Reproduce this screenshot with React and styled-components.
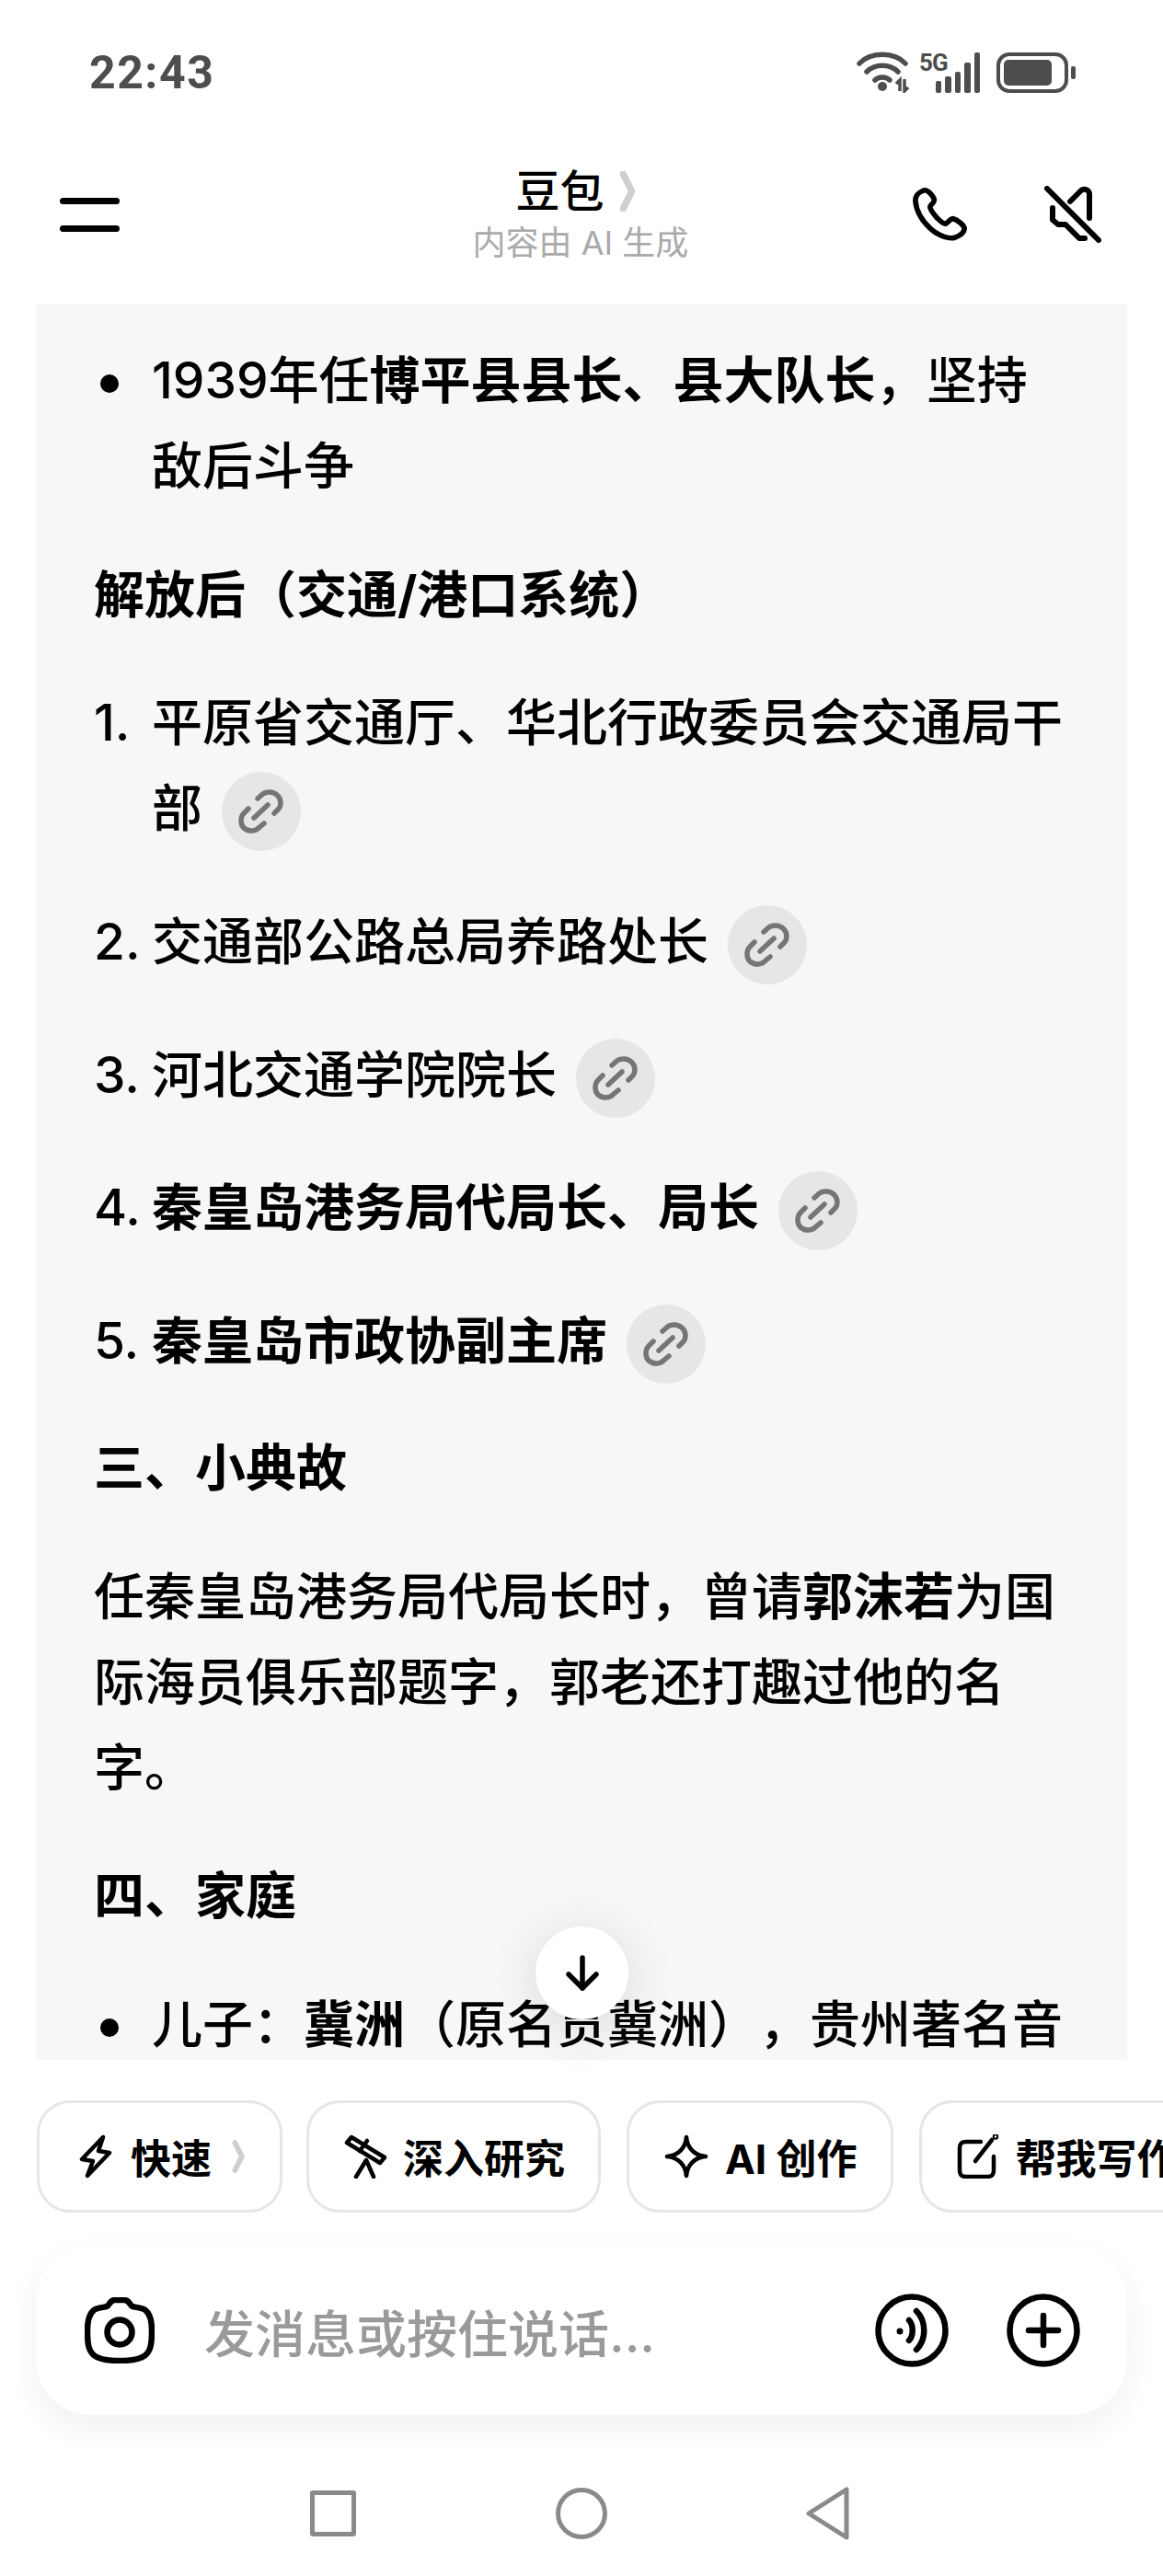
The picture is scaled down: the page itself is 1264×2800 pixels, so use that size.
import React from "react";
import styled, { createGlobalStyle } from "styled-components";

const FONT = `"Inter", "Noto Sans CJK SC", "Noto Sans", sans-serif`;

const GlobalStyle = createGlobalStyle`
  html, body {
    margin: 0;
    padding: 0;
    background: #fff;
  }
  body {
    font-family: ${FONT};
  }
`;

const Chevron = ({ className }) => (
  <svg className={className} viewBox="0 0 18 42" fill="none">
    <path d="M4 3 L13 21 L4 39" stroke="#cfcfcf" strokeWidth="7" strokeLinejoin="round" strokeLinecap="round" />
  </svg>
);

const LinkIcon = () => (
  <svg width="52" height="52" viewBox="-3 -3 52 52" fill="none" stroke="#757575" strokeWidth="5.5" strokeLinecap="round">
    <path d="M19 9 L24 4.5 C28 1 36 1 40.5 5.5 C45 10 45 17 41 21 L37 25" />
    <path d="M9 20 L4 25 C0 29 0 37 4 41 C9 45 16 45 20 41 L26 36" />
    <path d="M15 30 L30 16" />
  </svg>
);

const App = () => {
  return (
    <Page>
      <GlobalStyle />
      <StatusBar>
        <Clock>22:43</Clock>
        <StatusIcons>
          <svg width="58" height="46" viewBox="0 0 58 46" fill="none">
            <g stroke="#4d4d4d" strokeWidth="5.5" strokeLinecap="round">
              <path d="M3 14 C15 1 41 1 53 14" />
              <path d="M11 23 C20 14 36 14 45 23" />
              <path d="M20 32 C24 28 32 28 36 32" />
            </g>
            <circle cx="28" cy="39" r="5" fill="#4d4d4d" />
            <path d="M47 44 V32 L43 36 M52 31 V44 L56 40" stroke="#4d4d4d" strokeWidth="3.5" fill="none" />
          </svg>
          <Signal>
            <NetLabel>5G</NetLabel>
            <Bars>
              {[13, 18, 23, 33, 44].map((h) => (
                <Bar key={h} $h={h} />
              ))}
            </Bars>
          </Signal>
          <Battery>
            <BatteryShell>
              <BatteryLevel />
            </BatteryShell>
            <BatteryTip />
          </Battery>
        </StatusIcons>
      </StatusBar>

      <Header>
        <MenuButton>
          <MenuLine />
          <MenuLine />
        </MenuButton>
        <TitleBlock>
          <TitleRow>
            <Title>豆包</Title>
            <TitleChevron />
          </TitleRow>
          <Subtitle>内容由 AI 生成</Subtitle>
        </TitleBlock>
        <HeaderActions>
          <svg width="60" height="58" viewBox="0 0 64 62" fill="none" stroke="#000" strokeWidth="6" strokeLinejoin="round" strokeLinecap="round">
            <path d="M11 4 C6 6 3 10 3 15 C4 27 11 39 21 48 C30 56 42 60 49 58 C54 56 60 52 60 47 C59 43 51 37 47 36 C43 36 41 41 38 42 C32 41 20 27 20 22 C21 19 25 18 25 14 C24 10 18 3 14 3 C13 3 12 3 11 4 Z" />
          </svg>
          <svg width="62" height="62" viewBox="0 0 62 62" fill="none" stroke="#000" strokeWidth="6" strokeLinecap="round" strokeLinejoin="round">
            <path d="M3 3 L59 59" />
            <path d="M28 17 L40 5 C44 2 49 5 49 9 V35" />
            <path d="M9 24 V37 L15 42 H23 L38 57 H44" />
          </svg>
        </HeaderActions>
      </Header>

      <ChatArea>
        <Panel>
          <ListItem>
            <Bullet />
            <ItemText>
              1939年任<b>博平县县长、县大队长</b>，坚持敌后斗争
            </ItemText>
          </ListItem>

          <Heading>解放后（交通/港口系统）</Heading>

          <ListItem>
            <Num>1.</Num>
            <ItemText>
              平原省交通厅、华北行政委员会交通局干部
              <Cite>
                <LinkIcon />
              </Cite>
            </ItemText>
          </ListItem>
          <ListItem>
            <Num>2.</Num>
            <ItemText>
              交通部公路总局养路处长
              <Cite>
                <LinkIcon />
              </Cite>
            </ItemText>
          </ListItem>
          <ListItem>
            <Num>3.</Num>
            <ItemText>
              河北交通学院院长
              <Cite>
                <LinkIcon />
              </Cite>
            </ItemText>
          </ListItem>
          <ListItem>
            <Num>4.</Num>
            <ItemText>
              <b>秦皇岛港务局代局长、局长</b>
              <Cite>
                <LinkIcon />
              </Cite>
            </ItemText>
          </ListItem>
          <ListItem $last>
            <Num>5.</Num>
            <ItemText>
              <b>秦皇岛市政协副主席</b>
              <Cite>
                <LinkIcon />
              </Cite>
            </ItemText>
          </ListItem>

          <Heading>三、小典故</Heading>
          <Para>
            任秦皇岛港务局代局长时，曾请<b>郭沫若</b>为国际海员俱乐部题字，郭老还打趣过他的名字。
          </Para>

          <Heading>四、家庭</Heading>
          <ListItem>
            <Bullet />
            <ItemText>
              儿子：<b>冀洲</b>（原名贯冀洲），贵州著名音乐家
            </ItemText>
          </ListItem>
        </Panel>
        <ScrollDown>
          <svg width="36" height="40" viewBox="0 0 36 40" fill="none" stroke="#000" strokeWidth="5.5" strokeLinecap="round" strokeLinejoin="round">
            <path d="M18 3 V36" />
            <path d="M3 21 L18 36 L33 21" />
          </svg>
        </ScrollDown>
      </ChatArea>

      <ChipRow>
        <Chip $lead>
          <svg width="36" height="48" viewBox="0 0 36 48" fill="none" stroke="#000" strokeWidth="4.5" strokeLinejoin="round" strokeLinecap="round">
            <path d="M26 3 L3 27 L15 29 L9 45 L33 20 L21 18 Z" />
          </svg>
          快速
          <ChipChevron />
        </Chip>
        <Chip>
          <svg width="46" height="48" viewBox="0 0 46 48" fill="none" stroke="#000" strokeWidth="4.5" strokeLinejoin="round" strokeLinecap="round">
            <path d="M8 3 L44 25 L39 31 L3 9 Z" />
            <path d="M17 18 L25 7" />
            <path d="M24 28 L13 46 M24 28 L32 46" />
          </svg>
          深入研究
        </Chip>
        <Chip>
          <svg width="48" height="48" viewBox="0 0 48 48" fill="none" stroke="#000" strokeWidth="4.5" strokeLinejoin="round">
            <path d="M24 3 C25 15 33 23 45 24 C33 25 25 33 24 45 C23 33 15 25 3 24 C15 23 23 15 24 3 Z" />
          </svg>
          AI 创作
        </Chip>
        <Chip>
          <svg width="46" height="48" viewBox="0 0 46 48" fill="none" stroke="#000" strokeWidth="4.5" strokeLinecap="round" strokeLinejoin="round">
            <path d="M26 8 H10 C5 8 3 10 3 15 V39 C3 44 5 46 10 46 H33 C38 46 40 44 40 39 V24" />
            <path d="M20 29 L38 6" />
            <circle cx="42" cy="2.5" r="1" />
          </svg>
          帮我写作
        </Chip>
      </ChipRow>

      <InputCard>
        <svg width="76" height="72" viewBox="0 0 76 72" fill="none" stroke="#000" strokeWidth="6.5" strokeLinejoin="round">
          <path d="M24 10 C27 9 27 3 33 3 H43 C49 3 49 9 52 10 C54 11 62 11 66 14 C71 18 73 24 73 36 C73 50 72 58 66 63 C60 68 50 69 38 69 C26 69 16 68 10 63 C4 58 3 50 3 36 C3 24 5 18 10 14 C14 11 22 11 24 10 Z" />
          <circle cx="38" cy="38" r="13.5" />
        </svg>
        <Placeholder>发消息或按住说话...</Placeholder>
        <InputActions>
          <svg width="80" height="80" viewBox="0 0 80 80" fill="none" stroke="#000" strokeWidth="6.5" strokeLinecap="round">
            <circle cx="40" cy="40" r="36.5" />
            <path d="M37 29 C42 34 42 46 37 51" />
            <path d="M45 19 C56 30 56 50 45 61" />
            <circle cx="27" cy="41" r="3.5" fill="#000" stroke="none" />
          </svg>
          <svg width="80" height="80" viewBox="0 0 80 80" fill="none" stroke="#000" strokeWidth="6.5" strokeLinecap="round">
            <circle cx="40" cy="40" r="36.5" />
            <path d="M40 24 V56 M24 40 H56" />
          </svg>
        </InputActions>
      </InputCard>

      <NavBar>
        <NavSquare />
        <NavCircle />
        <svg width="48" height="58" viewBox="0 0 48 58" fill="none" stroke="#8a8a8a" strokeWidth="5" strokeLinejoin="round">
          <path d="M44 3 V55 L3 29 Z" />
        </svg>
      </NavBar>
    </Page>
  );
};

export default App;

const Page = styled.div`
  width: 1264px;
  height: 2800px;
  background: #fff;
  overflow: hidden;
  display: flex;
  flex-direction: column;
  font-family: ${FONT};
  color: #000;
`;

const StatusBar = styled.div`
  height: 156px;
  box-sizing: border-box;
  padding: 0 95px 0 97px;
  display: flex;
  align-items: center;
  justify-content: space-between;
`;

const Clock = styled.div`
  padding-top: 2px;
  font-family: "Roboto", sans-serif;
  font-weight: 700;
  font-size: 50px;
  letter-spacing: 1.5px;
  color: #4d4d4d;
`;

const StatusIcons = styled.div`
  display: flex;
  align-items: flex-end;
  gap: 10px;
`;

const Signal = styled.div`
  position: relative;
  width: 66px;
  height: 44px;
  display: flex;
  justify-content: flex-end;
  align-items: flex-end;
`;

const NetLabel = styled.span`
  position: absolute;
  left: 0;
  top: -4px;
  font-family: "Roboto", sans-serif;
  font-weight: 700;
  font-size: 26px;
  letter-spacing: -1px;
  color: #4d4d4d;
`;

const Bars = styled.div`
  display: flex;
  align-items: flex-end;
  gap: 4px;
`;

const Bar = styled.span`
  width: 6.5px;
  height: ${(p) => p.$h}px;
  background: #4d4d4d;
  border-radius: 2px;
`;

const Battery = styled.div`
  display: flex;
  align-items: center;
  gap: 3px;
  margin-left: 8px;
`;

const BatteryShell = styled.div`
  width: 78px;
  height: 44px;
  box-sizing: border-box;
  border: 4px solid #4d4d4d;
  border-radius: 14px;
  padding: 4px;
`;

const BatteryLevel = styled.div`
  width: 52px;
  height: 100%;
  background: #4d4d4d;
  border-radius: 5px;
`;

const BatteryTip = styled.div`
  width: 5px;
  height: 14px;
  background: #4d4d4d;
  border-radius: 2px;
`;

const Header = styled.header`
  height: 174px;
  box-sizing: border-box;
  padding: 0 67px 20px 65px;
  display: grid;
  grid-template-columns: 1fr auto 1fr;
  align-items: center;
`;

const MenuButton = styled.div`
  width: 65px;
  display: flex;
  flex-direction: column;
  gap: 23px;
`;

const MenuLine = styled.span`
  height: 7px;
  border-radius: 4px;
  background: #000;
`;

const TitleBlock = styled.div`
  display: flex;
  flex-direction: column;
  align-items: center;
`;

const TitleRow = styled.div`
  display: flex;
  align-items: center;
  gap: 16px;
  margin-left: -10px;
`;

const Title = styled.div`
  font-size: 48px;
  line-height: 56px;
  font-weight: 500;
`;

const TitleChevron = styled(Chevron)`
  width: 19px;
  height: 44px;
`;

const Subtitle = styled.div`
  margin-top: 6px;
  font-size: 36px;
  line-height: 44px;
  color: #aaa;
`;

const HeaderActions = styled.div`
  justify-self: end;
  display: flex;
  align-items: center;
  gap: 83px;
`;

const ChatArea = styled.div`
  position: relative;
  margin: 0 39px;
  height: 1909px;
`;

const Panel = styled.div`
  height: 100%;
  box-sizing: border-box;
  overflow: hidden;
  background: #f7f7f7;
  padding: 37px 63px 0;
  font-size: 55px;
  font-weight: 500;
  line-height: 93px;
  text-spacing-trim: space-all;

  b {
    font-weight: 700;
  }
`;

const ListItem = styled.div`
  display: grid;
  grid-template-columns: 63px 1fr;
  margin-bottom: ${(p) => (p.$last ? 39.7 : 46.7)}px;
`;

const Bullet = styled.span`
  width: 20px;
  height: 20px;
  margin: 40px 0 0 7px;
  border-radius: 50%;
  background: #000;
`;

const Num = styled.span`
  font-size: 55px;
`;

const ItemText = styled.div``;

const Heading = styled.div`
  font-weight: 700;
  margin-bottom: 46.7px;
`;

const Para = styled.p`
  margin: 0 0 46.7px;
`;

/* the flex baseline is the icon's bottom edge, 17px above the circle's */
const Cite = styled.span`
  display: inline-flex;
  align-items: center;
  justify-content: center;
  width: 86px;
  height: 86px;
  margin: 0 0 5px 21px;
  border-radius: 50%;
  background: #e6e6e6;
  vertical-align: -10px;
`;

const ScrollDown = styled.div`
  position: absolute;
  left: 543px;
  bottom: 44px;
  width: 101px;
  height: 101px;
  display: flex;
  align-items: center;
  justify-content: center;
  border-radius: 50%;
  background: #fff;
  box-shadow: 0 8px 56px rgba(0, 0, 0, 0.13);
`;

const ChipRow = styled.div`
  margin-top: 44px;
  padding-left: 40px;
  display: flex;
  gap: 28px;
`;

const Chip = styled.div`
  flex: none;
  height: 122px;
  box-sizing: border-box;
  padding: 0 ${(p) => (p.$lead ? 37 : 36)}px 0 ${(p) => (p.$lead ? 43 : 38)}px;
  margin-right: ${(p) => (p.$lead ? -2 : 0)}px;
  display: flex;
  align-items: center;
  gap: ${(p) => (p.$lead ? 20 : 18)}px;
  border: 3px solid #e6e6e6;
  border-radius: 36px;
  font-size: 44px;
  font-weight: 700;
  white-space: nowrap;
`;

const ChipChevron = styled(Chevron)`
  width: 15px;
  height: 36px;
  margin-left: 2px;
`;

const InputCard = styled.div`
  margin: 36px 39px 0;
  height: 184px;
  box-sizing: border-box;
  padding: 0 51px 0 53px;
  display: flex;
  align-items: center;
  gap: 54px;
  background: #fff;
  border-radius: 60px;
  box-shadow: 0 14px 36px rgba(0, 0, 0, 0.06);
`;

const Placeholder = styled.div`
  flex: 1;
  font-size: 55px;
  font-weight: 500;
  color: #9a9a9a;
`;

const InputActions = styled.div`
  display: flex;
  gap: 63px;
`;

const NavBar = styled.div`
  margin-top: 78px;
  padding: 0 340px 0 337px;
  display: flex;
  align-items: center;
  justify-content: space-between;
`;

const NavSquare = styled.span`
  width: 50px;
  height: 50px;
  box-sizing: border-box;
  border: 5px solid #8a8a8a;
  border-radius: 3px;
`;

const NavCircle = styled.span`
  width: 56px;
  height: 56px;
  box-sizing: border-box;
  border: 5px solid #8a8a8a;
  border-radius: 50%;
`;
